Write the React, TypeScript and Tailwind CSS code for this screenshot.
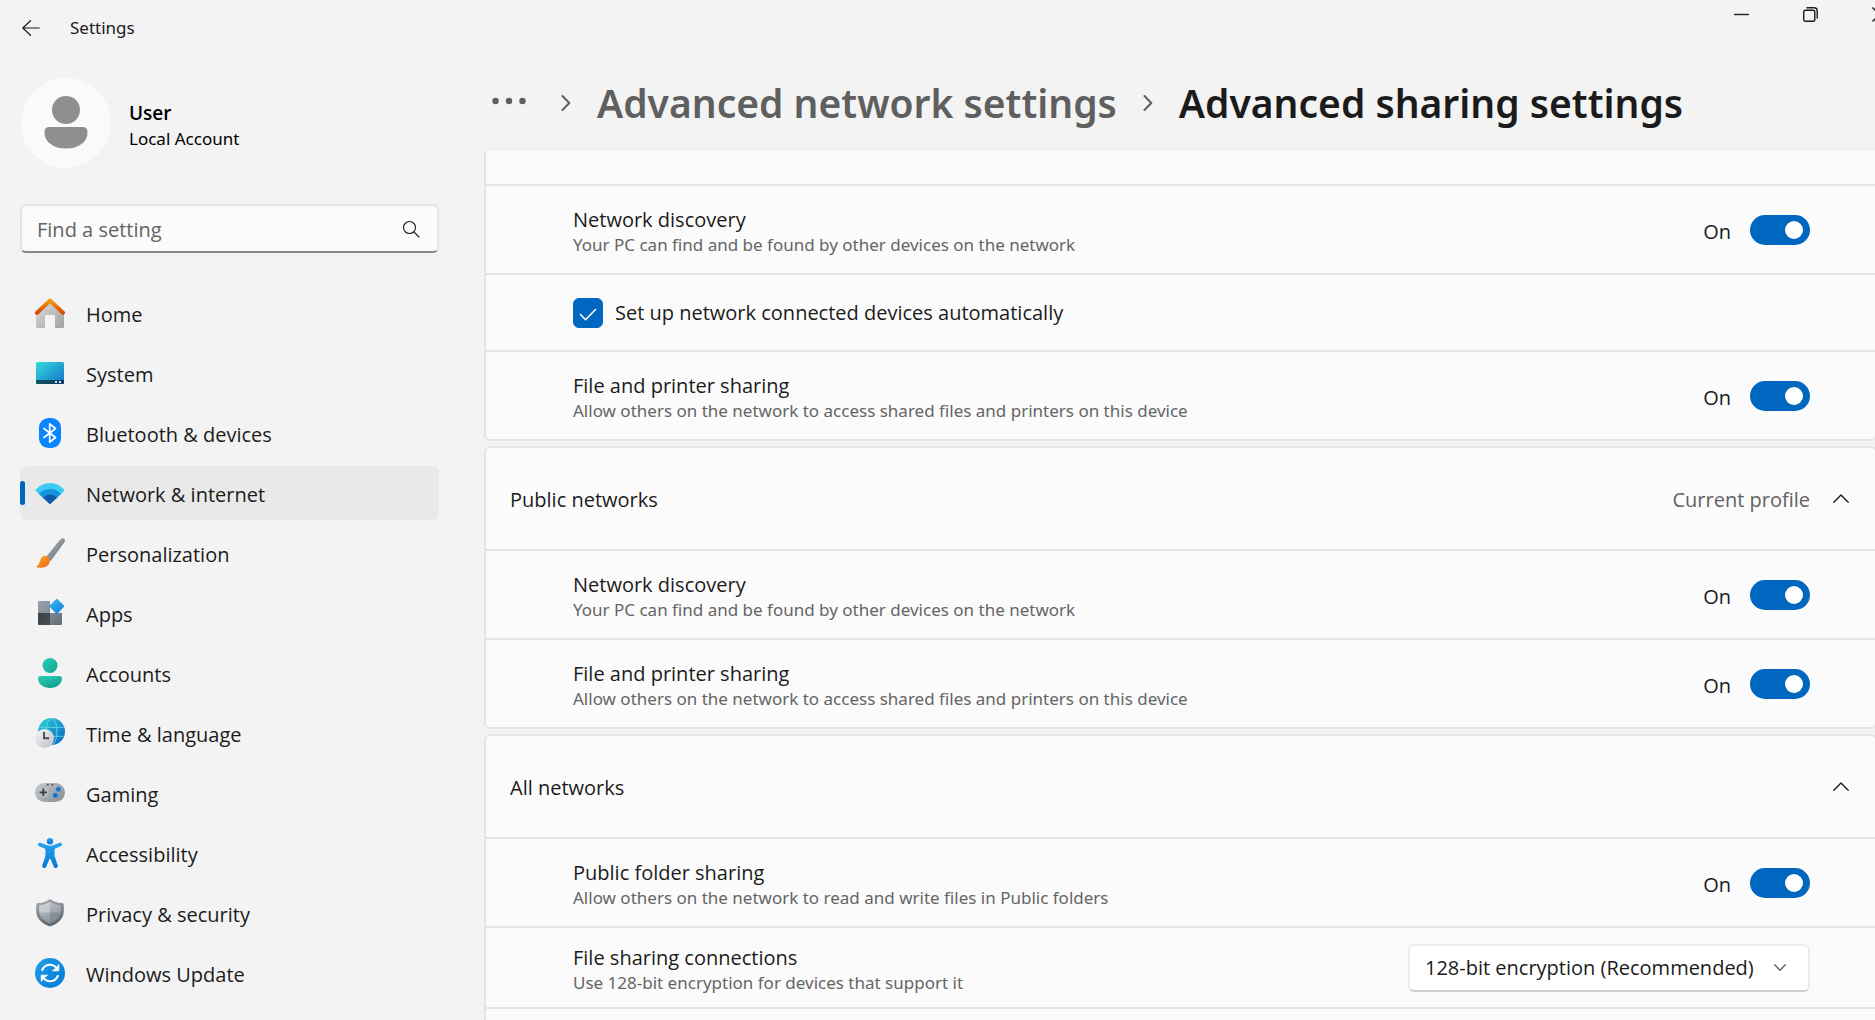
import React, { ReactNode, useState } from "react";

/* ---------- Navigation icons (30 x 30) ---------- */

function Icon({ children }: { children: ReactNode }) {
  return (
    <svg viewBox="0 0 30 30" className="size-[30px] shrink-0" fill="none" aria-hidden="true">
      {children}
    </svg>
  );
}

function Gradient({ id, from, to, x2 = 1, y2 = 1 }: { id: string; from: string; to: string; x2?: number; y2?: number }) {
  return (
    <linearGradient id={id} x1="0" y1="0" x2={x2} y2={y2}>
      <stop stopColor={from} />
      <stop offset="1" stopColor={to} />
    </linearGradient>
  );
}

const HomeIcon = () => (
  <Icon>
    <defs>
      <Gradient id="homeWall" from="#dedede" to="#a2a2a2" />
      <Gradient id="homeRoof" from="#f59a0c" to="#d64a08" x2={0} />
    </defs>
    <path d="M1 14 15 2l14 12v14.5q0 1.500-1.500 1.500H20V18q0-1-1-1h-8q-1 0-1 1v12H2.500Q1 30 1 28.500Z" fill="url(#homeWall)" />
    <path d="M2 14.800 15 2.500l13 12.300" stroke="url(#homeRoof)" strokeWidth="4" strokeLinecap="round" strokeLinejoin="round" />
  </Icon>
);

const SystemIcon = () => (
  <Icon>
    <defs>
      <Gradient id="sysScreen" from="#35dbe0" to="#1272c4" />
      <Gradient id="sysBar" from="#0f5663" to="#0b3763" x2={1} y2={0} />
    </defs>
    <rect x="1" y="4" width="28" height="22" rx="1.500" fill="url(#sysScreen)" />
    <path d="M1 22h28v2.500q0 1.500-1.500 1.500h-25Q1 26 1 24.500Z" fill="url(#sysBar)" />
    <path d="M20 23h2v2h-2zM24 23h2v2h-2z" fill="#d3e2ec" />
  </Icon>
);

const BluetoothIcon = () => (
  <Icon>
    <rect x="4" y="0" width="22" height="30" rx="9.500" fill="#0a84ff" />
    <path d="m9 10.500 11.500 9-5.800 4.700V5.800l5.800 4.700-11.500 9" stroke="#fff" strokeWidth="1.700" strokeLinecap="round" strokeLinejoin="round" />
  </Icon>
);

const WifiIcon = () => (
  <Icon>
    <defs>
      <clipPath id="wifiWedge">
        <path d="M14.300 25.400 1 13.200Q0 12.200 1.100 11.200 7 5 15 5t13.900 6.200q1.100 1 .1 2L15.700 25.400q-.7.6-1.400 0Z" />
      </clipPath>
    </defs>
    <g clipPath="url(#wifiWedge)">
      <path d="M0 0h30v30H0z" fill="#3ccbf4" />
      <circle cx="15" cy="26" r="15" fill="#1791e0" />
      <circle cx="15" cy="26" r="9.500" fill="#0f5ba8" />
    </g>
  </Icon>
);

const BrushIcon = () => (
  <Icon>
    <defs>
      <Gradient id="brushHandle" from="#b6bec5" to="#5f686f" />
      <Gradient id="brushTip" from="#ffb01f" to="#f0601a" />
    </defs>
    <path d="M10.500 19.500 24.800 2q2.200-2.400 4.300-1.500 1.600 1.500 0 4.300L15.700 23Z" fill="url(#brushHandle)" />
    <path d="M.8 28.600q3-.7 3.900-4.800 1.200-5.600 5.300-6 5 1 4.900 5.700-1.400 6.100-8.900 6.300-4.200.1-5.200-1.200Z" fill="url(#brushTip)" />
  </Icon>
);

const AppsIcon = () => (
  <Icon>
    <defs>
      <Gradient id="appsA" from="#98a2ae" to="#838d98" />
      <Gradient id="appsB" from="#3b4045" to="#4b5055" />
      <Gradient id="appsC" from="#808a94" to="#626c76" />
      <Gradient id="appsD" from="#35bdf8" to="#1579d8" />
    </defs>
    <path d="M4 3h11v12H3V4q0-1 1-1Z" fill="url(#appsA)" />
    <path d="M3 15h12v12H4q-1 0-1-1Z" fill="url(#appsB)" />
    <path d="M15 15h12v11q0 1-1 1H15Z" fill="url(#appsC)" />
    <path d="m21 1.300-6.200 6.200q-.7.800 0 1.600l6.200 6.300q.8.700 1.600 0l6.200-6.300q.7-.8 0-1.600l-6.200-6.200q-.8-.7-1.600 0Z" fill="url(#appsD)" />
  </Icon>
);

const AccountsIcon = () => (
  <Icon>
    <defs>
      <Gradient id="accA" from="#2ad0b8" to="#12a28e" />
      <Gradient id="accB" from="#2ad0b8" to="#12a28e" x2={0.5} />
    </defs>
    <circle cx="15" cy="7.500" r="7.500" fill="url(#accA)" />
    <path d="M5.500 18h19q2.500 0 2.500 2.500C27 26 21.500 30 15 30S3 26 3 20.500Q3 18 5.500 18Z" fill="url(#accB)" />
  </Icon>
);

const TimeIcon = () => (
  <Icon>
    <defs>
      <Gradient id="timeGlobe" from="#2fd4dc" to="#0c62bd" />
      <Gradient id="timeClock" from="#f3f4f5" to="#bfc3c7" />
    </defs>
    <circle cx="16.500" cy="13.500" r="13.500" fill="url(#timeGlobe)" />
    <g stroke="#6fe3f0" strokeWidth="1" opacity=".8">
      <ellipse cx="16.500" cy="13.500" rx="5.500" ry="13.200" />
      <path d="M4.500 9.300h24M4.500 18.300h24" />
    </g>
    <circle cx="9.500" cy="20.500" r="9.500" fill="url(#timeClock)" />
    <path d="M9 14v6.300h5.200" stroke="#4a4f54" strokeWidth="1.900" />
  </Icon>
);

const GamingIcon = () => (
  <Icon>
    <defs>
      <Gradient id="gamePad" from="#c6cbd0" to="#8d969e" y2={0.6} />
    </defs>
    <rect x="0" y="5" width="30" height="19" rx="9.500" fill="url(#gamePad)" />
    <circle cx="8.300" cy="14.300" r="5.300" fill="#b9bec3" />
    <path d="M8.300 10.600V18M4.600 14.300H12" stroke="#3a3d40" strokeWidth="1.800" />
    <path d="M12 6h1.600v1.600H12zM16.500 6h1.600v1.600h-1.600z" fill="#43484c" />
    <circle cx="23.300" cy="11.300" r="2.400" fill="#0f74d1" />
    <circle cx="20.300" cy="17.300" r="2.400" fill="#0f74d1" />
  </Icon>
);

const AccessibilityIcon = () => (
  <Icon>
    <defs>
      <Gradient id="a11y" from="#28a4ea" to="#0675d6" x2={0} />
    </defs>
    <circle cx="15" cy="3.200" r="3.200" fill="url(#a11y)" />
    <path
      d="M5.300 4.800q-1.800-.5-2.300 1.300-.3 1.500 1.200 2.200l5.600 2.200q.6.300.6 1V18L7.300 27.200q-.5 2 1.200 2.700 1.900.5 2.700-1.200L14.500 21q.5-.9 1 0l3.300 7.700q.8 1.700 2.700 1.200 1.700-.7 1.200-2.700L19.600 18v-6.500q0-.7.6-1l5.600-2.200q1.500-.7 1.200-2.200-.5-1.800-2.300-1.300L18.500 7.100q-3.500 1.200-7 0Z"
      fill="url(#a11y)"
    />
  </Icon>
);

const ShieldIcon = () => (
  <Icon>
    <defs>
      <Gradient id="shieldEdge" from="#a9afb5" to="#5e666e" x2={0.3} />
      <Gradient id="shieldFace" from="#c3c8cd" to="#8b939b" x2={0.4} />
    </defs>
    <path d="M15 1q5.500 3.800 12 4 1.800.1 1.800 1.800V13q0 10.500-13.800 15.500Q1.200 23.500 1.200 13V6.800Q1.200 5.100 3 5 9.500 4.800 15 1Z" fill="url(#shieldEdge)" />
    <path d="M15 4q4.800 3 10.800 3.400V13q0 8.300-10.800 12.500Q4.200 21.300 4.200 13V7.400Q10.200 7 15 4Z" fill="url(#shieldFace)" />
    <path d="M15 4v10.500H4.300q-.2-3-.1-7.100Q10.200 7 15 4Z" fill="#ced2d6" opacity=".75" />
    <path d="M15 14.500h10.700q-1 7-10.700 11Z" fill="#7a838c" opacity=".6" />
  </Icon>
);

const UpdateIcon = () => (
  <Icon>
    <defs>
      <Gradient id="update" from="#229fe8" to="#0078d4" />
    </defs>
    <circle cx="15" cy="15" r="15" fill="url(#update)" />
    <g stroke="#fff" strokeWidth="2.100" strokeLinecap="round" strokeLinejoin="round">
      <path d="M7.200 12C10 5.500 18.500 5 22 11" />
      <path d="M22.800 18C20 24.500 11.500 25 8 19" />
    </g>
    <path d="M23.800 6.600v6.200h-6.400l2.600-1.900 2.200-.3.200-2.700ZM6.200 23.400v-6.200h6.400L10 19.100l-2.200.3-.2 2.700Z" fill="#fff" stroke="#fff" strokeWidth=".8" strokeLinejoin="round" />
  </Icon>
);

/* ---------- Sidebar ---------- */

const navItems = [
  { label: "Home", icon: <HomeIcon /> },
  { label: "System", icon: <SystemIcon /> },
  { label: "Bluetooth & devices", icon: <BluetoothIcon /> },
  { label: "Network & internet", icon: <WifiIcon /> },
  { label: "Personalization", icon: <BrushIcon /> },
  { label: "Apps", icon: <AppsIcon /> },
  { label: "Accounts", icon: <AccountsIcon /> },
  { label: "Time & language", icon: <TimeIcon /> },
  { label: "Gaming", icon: <GamingIcon /> },
  { label: "Accessibility", icon: <AccessibilityIcon /> },
  { label: "Privacy & security", icon: <ShieldIcon /> },
  { label: "Windows Update", icon: <UpdateIcon /> },
];

function Sidebar() {
  return (
    <aside className="w-[484px] shrink-0 pr-[45px] pl-5">
      <header className="flex h-14 items-center gap-7">
        <button type="button" aria-label="Back" className="flex h-8 w-[22px] items-center justify-center">
          <svg viewBox="0 0 18 16" className="h-4 w-[18px]" fill="none" stroke="#1b1b1b" strokeWidth="1.200" strokeLinecap="round" strokeLinejoin="round">
            <path d="M8.500.700.800 8l7.700 7.300M.8 8h16.500" />
          </svg>
        </button>
        <span className="font-['Noto_Sans','Open_Sans',sans-serif] text-[17px] leading-6">Settings</span>
      </header>

      <button type="button" className="mt-[22px] flex items-center gap-[18px] pl-px text-left">
        <svg viewBox="0 0 90 90" className="size-[90px]" aria-hidden="true">
          <circle cx="45" cy="45" r="45" fill="#fafafa" />
          <circle cx="45" cy="32" r="14" fill="#8f8f8f" />
          <path d="M28.500 49h33q5 0 5 5 0 8-6 12-6 4.500-15.500 4.500T29.500 66q-6-4-6-12 0-5 5-5Z" fill="#8f8f8f" />
        </svg>
        <span className="flex flex-col pt-[5px] text-black">
          <span className="text-[19px] leading-[25px] font-semibold">User</span>
          <span className="font-['Noto_Sans','Open_Sans',sans-serif] text-[17px] leading-[25px]">Local Account</span>
        </span>
      </button>

      <div role="search" className="mt-9 flex h-[49px] items-center rounded-md border-2 border-[#e5e5e5] border-b-[#868686] bg-[#fbfbfb] pr-[17px] pl-[15px]">
        <input type="text" aria-label="Find a setting" placeholder="Find a setting" className="min-w-0 flex-1 bg-transparent pt-0.5 text-[20px] outline-none placeholder:text-[#646464]" />
        <svg viewBox="0 0 18 18" className="size-[18px]" fill="none" stroke="#1b1b1b" strokeWidth="1.100" strokeLinecap="round" aria-hidden="true">
          <circle cx="7.500" cy="7.500" r="6" />
          <path d="m12 12 5 5" />
        </svg>
      </div>

      <nav className="mt-[33px] flex flex-col gap-1.5">
        {navItems.map(({ label, icon }) => {
          const current = label === "Network & internet";
          return (
            <a
              key={label}
              href="#"
              aria-current={current ? "page" : undefined}
              className={
                current
                  ? "relative flex h-[54px] items-center gap-[21px] rounded-md bg-[#e9e9e9] pl-[15px] before:absolute before:left-0 before:h-6 before:w-[5px] before:rounded-full before:bg-[#0067c0]"
                  : "flex h-[54px] items-center gap-[21px] rounded-md pl-[15px]"
              }
            >
              {icon}
              <span className="pt-1">{label}</span>
            </a>
          );
        })}
      </nav>
    </aside>
  );
}

/* ---------- Settings content ---------- */

function Toggle({ label }: { label: string }) {
  const [on, setOn] = useState(true);
  return (
    <label className="flex items-center gap-[19px]">
      <span className="pt-1">{on ? "On" : "Off"}</span>
      <input
        type="checkbox"
        role="switch"
        aria-label={label}
        checked={on}
        onChange={(e) => setOn(e.target.checked)}
        className="flex h-[30px] w-[60px] appearance-none items-center justify-start rounded-full bg-[#8a8a8a] px-[7px] before:size-[18px] before:rounded-full before:bg-white checked:justify-end checked:bg-[#0067c0]"
      />
    </label>
  );
}

function RowText({ title, description }: { title: string; description: string }) {
  return (
    <div className="pt-1 leading-[25px]">
      <h3>{title}</h3>
      <p className="font-['Noto_Sans','Open_Sans',sans-serif] text-[17px] text-[#656565]">{description}</p>
    </div>
  );
}

function ToggleRow({ title, description }: { title: string; description: string }) {
  return (
    <div className="flex min-h-[89px] items-center justify-between border-t-2 border-[#e5e5e5] pr-[65px] pl-[87px]">
      <RowText title={title} description={description} />
      <Toggle label={title} />
    </div>
  );
}

function GroupHeader({ title, note }: { title: string; note?: string }) {
  return (
    <h2>
      <button type="button" aria-expanded="true" className="flex h-[101px] w-full items-center pr-[26px] pl-6 text-left">
        <span className="flex-1 pt-0.5">{title}</span>
        {note && <span className="mr-[23px] pt-0.5 text-[#626262]">{note}</span>}
        <svg viewBox="0 0 16 9" className="h-[9px] w-4" fill="none" stroke="#1b1b1b" strokeWidth="1.400" strokeLinecap="round" strokeLinejoin="round" aria-hidden="true">
          <path d="M.8 8.200 8 1l7.200 7.200" />
        </svg>
      </button>
    </h2>
  );
}

function CrumbChevron() {
  return (
    <svg viewBox="0 0 10 16" className="h-4 w-2.5 shrink-0" fill="none" stroke="#5f5f5f" strokeWidth="2" strokeLinecap="round" strokeLinejoin="round" aria-hidden="true">
      <path d="m1.500 1 6.800 7-6.800 7" />
    </svg>
  );
}

function WindowControls() {
  return (
    <div className="-mr-[39px] flex h-[29px] justify-end">
      <button type="button" aria-label="Minimize" className="flex w-[69px] items-center justify-center">
        <svg viewBox="0 0 15 15" className="size-[15px]" stroke="#1b1b1b" strokeWidth="1.400">
          <path d="M0 7.500h15" />
        </svg>
      </button>
      <button type="button" aria-label="Restore" className="flex w-[69px] items-center justify-center">
        <svg viewBox="0 0 15 15" className="size-[15px]" fill="none" stroke="#1b1b1b" strokeWidth="1.400">
          <rect x=".7" y="3.200" width="11.100" height="11.100" rx="1.800" />
          <path d="M3.500.8h7.700q3 0 3 3v7.700" />
        </svg>
      </button>
      <button type="button" aria-label="Close" className="flex w-[69px] items-center justify-center">
        <svg viewBox="0 0 15 15" className="size-[15px]" stroke="#1b1b1b" strokeWidth="1.400">
          <path d="m.5.500 14 14M14.500.500l-14 14" />
        </svg>
      </button>
    </div>
  );
}

const card = "rounded-md border-2 border-[#e5e5e5] bg-[#fbfbfb]";

export default function App() {
  const [auto, setAuto] = useState(true);
  return (
    <div className="flex h-screen overflow-hidden bg-[#f3f3f3] font-['Open_Sans','Noto_Sans',sans-serif] text-[20px] text-[#1b1b1b]">
      <Sidebar />

      <main className="flex min-w-0 flex-1 flex-col">
        <WindowControls />

        <nav
          aria-label="Breadcrumb"
          className="flex h-[122px] shrink-0 items-center gap-[26px] pt-[26px] pl-2 font-['Noto_Sans','Open_Sans',sans-serif] text-[39px] leading-[54px] font-semibold whitespace-nowrap"
        >
          <button type="button" aria-label="More" className="mr-[9px]">
            <svg viewBox="0 0 34 8" className="mb-1 h-2 w-[34px]" fill="#5f5f5f">
              <circle cx="3.500" cy="4" r="3.200" />
              <circle cx="17" cy="4" r="3.200" />
              <circle cx="30.500" cy="4" r="3.200" />
            </svg>
          </button>
          <CrumbChevron />
          <a href="#" className="text-[#5f5f5f]">Advanced network settings</a>
          <CrumbChevron />
          <h1>Advanced sharing settings</h1>
        </nav>

        <div className="-mr-0.5 flex min-h-0 flex-1 flex-col gap-[5px] overflow-hidden *:shrink-0">
          <section className="rounded-b-md border-2 border-t-0 border-[#e5e5e5] bg-[#fbfbfb] pt-[33px]">
            <ToggleRow title="Network discovery" description="Your PC can find and be found by other devices on the network" />
            <div className="flex min-h-[77px] items-center border-t-2 border-[#e5e5e5] pl-[87px]">
              <label className="flex items-center gap-3">
                <span className="grid place-items-center *:col-start-1 *:row-start-1">
                  <input
                    type="checkbox"
                    checked={auto}
                    onChange={(e) => setAuto(e.target.checked)}
                    className="size-[30px] appearance-none rounded-md border border-[#8a8a8a] checked:border-[#0067c0] checked:bg-[#0067c0]"
                  />
                  <svg viewBox="0 0 30 30" className="pointer-events-none size-[30px]" fill="none" stroke="#fff" strokeWidth="1.600" strokeLinecap="round" strokeLinejoin="round" aria-hidden="true">
                    <path d="m7.500 16.500 5 5.200L22.500 11.500" />
                  </svg>
                </span>
                Set up network connected devices automatically
              </label>
            </div>
            <ToggleRow title="File and printer sharing" description="Allow others on the network to access shared files and printers on this device" />
          </section>

          <section className={card}>
            <GroupHeader title="Public networks" note="Current profile" />
            <ToggleRow title="Network discovery" description="Your PC can find and be found by other devices on the network" />
            <ToggleRow title="File and printer sharing" description="Allow others on the network to access shared files and printers on this device" />
          </section>

          <section className={card}>
            <GroupHeader title="All networks" />
            <ToggleRow title="Public folder sharing" description="Allow others on the network to read and write files in Public folders" />
            <div className="flex min-h-[81px] items-center justify-between border-t-2 border-[#e5e5e5] pr-[65px] pl-[87px]">
              <RowText title="File sharing connections" description="Use 128-bit encryption for devices that support it" />
              <span className="grid items-center *:col-start-1 *:row-start-1">
                <select
                  aria-label="File sharing connections"
                  className="h-12 w-[402px] appearance-none rounded-md border-2 border-[#ececec] border-b-[#d0d0d0] bg-white pr-12 pl-[15px]"
                >
                  <option>128-bit encryption (Recommended)</option>
                </select>
                <svg viewBox="0 0 12 7" className="pointer-events-none mr-6 h-[7px] w-3 justify-self-end" fill="none" stroke="#5f5f5f" strokeWidth="1.300" strokeLinecap="round" strokeLinejoin="round" aria-hidden="true">
                  <path d="M.7.700 6 6.200 11.300.700" />
                </svg>
              </span>
            </div>
            <div className="min-h-[89px] border-t-2 border-[#e5e5e5]" />
          </section>
        </div>
      </main>
    </div>
  );
}
